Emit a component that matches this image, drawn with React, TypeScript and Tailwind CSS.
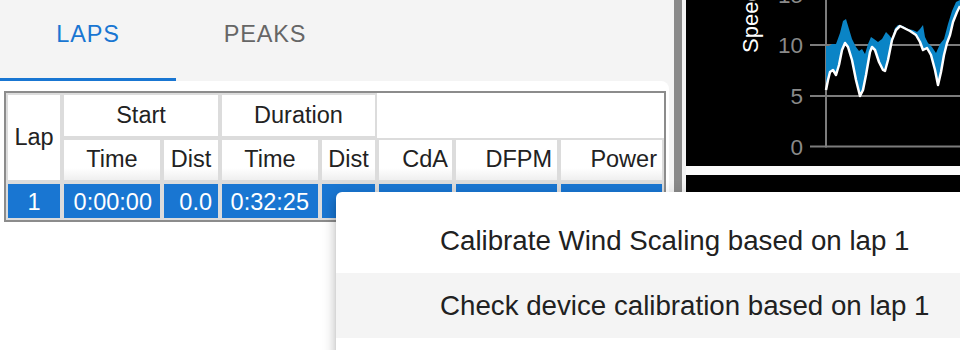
import React from 'react';

const font = "font-['Liberation_Sans',Arial,sans-serif]";

// blue band upper edge (absolute page coords, chart starts at x=686)
const bandTop: [number, number][] = [
  [826, 46], [829, 46], [832, 44], [836, 44], [840, 33], [843, 21], [846, 19], [849, 29],
  [852, 39], [856, 47], [859, 51], [862, 49], [865, 54], [868, 44], [871, 37], [874, 39],
  [878, 42], [882, 39], [886, 32], [889, 35], [892, 39], [895, 28], [898, 25], [903, 26],
  [908, 29], [913, 30], [917, 32], [920, 29], [923, 25], [925, 37], [928, 43], [932, 47],
  [936, 53], [940, 44], [944, 39], [948, 24], [952, 11], [956, 2], [960, 0],
];

const speedLine: [number, number][] = [
  [826, 90], [828, 80], [830, 72], [833, 70], [836, 75], [839, 65], [842, 50], [845, 43],
  [848, 47], [852, 60], [856, 80], [860, 96], [863, 90], [866, 75], [870, 52], [872, 47],
  [875, 50], [879, 62], [883, 70], [885, 71], [888, 60], [892, 40], [896, 30], [900, 26],
  [904, 28], [910, 31], [916, 35], [920, 42], [923, 50], [927, 48], [931, 55], [935, 70],
  [938, 85], [941, 72], [944, 55], [947, 43], [950, 35], [953, 22], [957, 12], [960, 6],
];

const pts = (p: [number, number][]) => p.map(([x, y]) => `${x},${y}`).join(' ');

function SpeedChart() {
  const ticks = [
    { label: '15', y: -5.5 },
    { label: '10', y: 45 },
    { label: '5', y: 96 },
    { label: '0', y: 146.5 },
  ];
  return (
    <svg width="274" height="166" viewBox="686 0 274 166" className="block">
      <text
        transform="translate(758,53) rotate(-90)"
        fill="#ffffff"
        fontSize="22"
        fontFamily="Liberation Sans, Arial, sans-serif"
      >
        Speed (km/h)
      </text>
      {ticks.map((t) => (
        <g key={t.label}>
          <line x1="810" x2="960" y1={t.y} y2={t.y} stroke="#7c7c7c" strokeWidth="2" />
          <text
            x="803"
            y={t.y + 8}
            textAnchor="end"
            fill="#8a8a8a"
            fontSize="22.5"
            fontFamily="Liberation Sans, Arial, sans-serif"
          >
            {t.label}
          </text>
        </g>
      ))}
      <line x1="826" x2="826" y1="0" y2="147.5" stroke="#7c7c7c" strokeWidth="2" />
      <polygon points={pts([...bandTop, ...[...speedLine].reverse()])} fill="#0a84c6" />
      <polyline points={pts(speedLine)} fill="none" stroke="#ffffff" strokeWidth="2.5" strokeLinejoin="round" />
    </svg>
  );
}

function LapsTable() {
  const cell = 'border-2 border-[#dcdcdc] flex items-center';
  const head2 = `${cell} bg-linear-to-b from-white from-70% to-[#efefef]`;
  const data = `${cell} bg-[#1976d2] text-white justify-end pr-[6px] pt-[3px]`;
  return (
    <div className="border-2 border-[#8c8c8c] bg-white w-max">
      <div className="grid grid-cols-[56px_100px_58px_100px_57px_77px_105px_105px] grid-rows-[45px_44px_38px] text-[23.5px] text-[#222]">
        <div className={`${cell} row-span-2 justify-center`}>Lap</div>
        <div className={`${cell} col-span-2 justify-center`}>Start</div>
        <div className={`${cell} col-span-2 justify-center`}>Duration</div>
        <div className="col-span-3" />

        <div className={`${head2} justify-center`}>Time</div>
        <div className={`${head2} justify-center`}>Dist</div>
        <div className={`${head2} justify-center`}>Time</div>
        <div className={`${head2} justify-center`}>Dist</div>
        <div className={`${head2} justify-end pr-[4px]`}>CdA</div>
        <div className={`${head2} justify-end pr-[5px]`}>DFPM</div>
        <div className={`${head2} justify-end pr-[5px]`}>Power</div>

        <div className={`${cell} bg-[#1976d2] text-white justify-center pt-[3px]`}>1</div>
        <div className={`${data} pr-[8px]`}>0:00:00</div>
        <div className={data}>0.0</div>
        <div className={`${data} pr-[9px]`}>0:32:25</div>
        <div className={data}>9.6</div>
        <div className={data}>0.251</div>
        <div className={data}>0.00</div>
        <div className={data}>198</div>
      </div>
    </div>
  );
}

function ContextMenu() {
  return (
    <div className="absolute left-[336px] top-[192px] w-[640px] h-[200px] bg-white rounded-[6px] py-[16px] shadow-[0_5px_5px_-3px_rgba(0,0,0,0.2),0_8px_10px_1px_rgba(0,0,0,0.14),0_3px_14px_2px_rgba(0,0,0,0.12)] z-10">
      <div className="h-[65px] flex items-center pl-[104px] text-[27.7px] text-[#212121]">
        Calibrate Wind Scaling based on lap 1
      </div>
      <div className="h-[65px] flex items-center pl-[104px] text-[27.7px] text-[#212121] bg-[#f4f4f4]">
        Check device calibration based on lap 1
      </div>
    </div>
  );
}

export default function App() {
  return (
    <div className={`relative w-[960px] h-[350px] overflow-hidden flex ${font}`}>
      <div className="w-[674px] shrink-0 bg-[#f4f4f4] flex flex-col">
        <div className="h-[81px] flex">
          <div className="w-[176px] flex flex-col">
            <div className="flex-1 flex items-center justify-center pb-[9px] text-[23.5px] tracking-[0.035em] text-[#1976d2]">
              LAPS
            </div>
            <div className="h-[3px] bg-[#1976d2]" />
          </div>
          <div className="w-[176px] flex items-center justify-center pb-[12px] pl-[2px] text-[23.5px] tracking-[0.035em] text-[#666]">
            PEAKS
          </div>
        </div>
        <div className="flex-1 bg-white rounded-tr-[8px] mr-[5px] pt-[10px] pl-[4px]">
          <LapsTable />
        </div>
      </div>
      <div className="w-[8px] shrink-0 bg-[#8a8a8a]" />
      <div className="flex-1 bg-[#f3f3f3] pl-[4px] flex flex-col">
        <div className="h-[166px] bg-black overflow-hidden">
          <SpeedChart />
        </div>
        <div className="h-[9px] bg-[#fafafa]" />
        <div className="flex-1 bg-black" />
      </div>
      <ContextMenu />
    </div>
  );
}
